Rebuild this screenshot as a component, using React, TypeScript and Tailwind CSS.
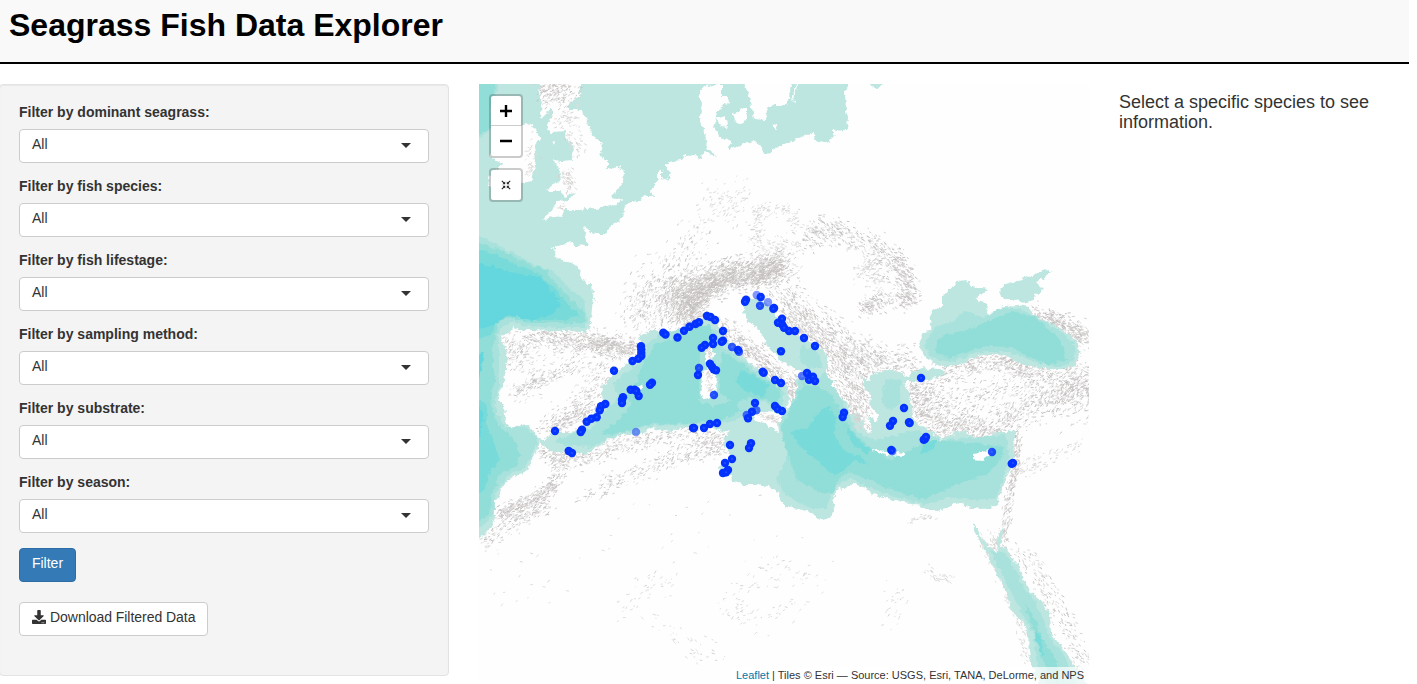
import type { ReactNode } from 'react';
import { FaDownload } from 'react-icons/fa';

const filters = [
  'Filter by dominant seagrass:',
  'Filter by fish species:',
  'Filter by fish lifestage:',
  'Filter by sampling method:',
  'Filter by substrate:',
  'Filter by season:',
];

// ---- Sea areas -------------------------------------------------------------
const atlantic =
  '470,75 848,75 848,87 845,91 846,111 848,117 847,130 832,131 832,134 836,135 831,140 824,143 816,140 813,132 802,136 789,143 772,149 772,153 764,154 762,149 759,144 753,141 742,145 729,149 728,146 732,141 726,139 719,137 718,132 714,127 717,117 721,107 729,102 728,97 722,97 722,84 716,84 703,87 699,93 702,105 700,117 703,130 707,139 705,144 710,150 716,156 712,155 706,151 703,153 702,159 696,158 695,154 686,155 682,160 674,161 667,164 667,170 671,174 667,181 662,178 662,171 661,168 658,171 658,179 654,184 651,191 653,197 645,197 636,202 625,205 623,217 614,224 607,231 605,234 596,234 590,233 588,229 584,227 586,237 588,245 576,246 572,242 562,244 552,248 556,251 554,256 559,259 574,264 581,271 582,277 587,284 592,284 593,294 598,306 593,297 591,321 587,333 572,331 552,331 532,330 522,330 517,327 512,329 511,332 501,336 504,344 507,354 506,367 504,381 499,394 498,399 504,406 506,424 512,427 527,424 534,432 541,440 538,446 534,457 527,471 512,477 502,487 499,497 495,501 495,517 492,527 482,537 470,545';
const mediterranean =
  '539,441 547,437 554,432 567,432 579,431 586,421 596,412 604,404 601,394 602,387 611,377 626,364 639,357 642,344 639,337 649,330 661,331 672,337 679,337 686,329 699,321 707,315 717,321 721,331 727,341 734,348 741,354 749,362 762,371 772,379 782,382 787,389 790,399 786,407 791,407 794,401 800,395 797,387 796,381 802,376 812,377 816,382 812,374 799,371 787,364 776,356 767,346 762,334 757,327 747,321 744,312 744,304 747,299 757,297 762,302 767,304 774,311 779,322 789,331 802,337 816,346 827,354 827,371 831,384 841,397 849,407 850,413 858,415 863,420 866,430 869,433 871,424 867,415 876,421 879,415 870,405 872,398 866,389 862,377 869,381 871,374 879,372 889,369 899,371 906,377 914,372 922,368 939,369 947,372 936,378 922,381 909,381 904,384 909,394 912,407 914,421 920,426 932,432 941,439 952,434 957,430 967,432 976,439 987,437 996,432 1007,432 1014,429 1016,434 1013,441 1014,454 1014,464 1009,471 1004,484 998,501 994,507 982,509 972,508 961,503 954,504 946,509 936,511 922,507 912,503 892,501 889,498 879,496 869,492 866,487 852,484 836,491 833,501 835,509 831,517 823,520 812,514 799,508 786,506 780,499 779,492 767,487 756,485 744,485 732,480 731,476 721,476 719,467 724,464 731,457 724,444 725,437 731,429 722,432 717,429 709,426 699,428 689,427 679,429 666,431 652,428 639,434 626,434 612,438 599,446 586,454 576,453 567,451 559,452 549,451 544,446';
const blackSea =
  '919,344 924,332 930,331 931,312 942,306 942,297 956,282 969,281 972,286 988,289 976,299 987,304 989,316 1004,306 1019,305 1029,307 1032,314 1056,326 1076,341 1080,354 1076,364 1066,369 1046,369 1029,366 1017,362 1004,354 982,354 962,364 949,367 936,364 924,356';
const azov =
  '999,291 1006,284 1022,279 1049,269 1052,271 1044,277 1036,282 1043,289 1036,294 1034,300 1022,303 1017,300 1004,299';
const redSea =
  '974,523 979,532 987,546 994,551 997,549 999,536 1003,523 1002,537 1000,547 1004,547 1019,567 1029,591 1042,601 1050,617 1051,634 1062,647 1072,661 1079,671 1090,690 1042,690 1031,664 1027,637 1024,621 1012,612 1007,594 994,567 986,551 974,531';
const gulfOfFinland = '866,75 886,75 883,84 876,89 870,86';

const depthBands: { fill: string; shapes: string[] }[] = [
  {
    fill: '#a9e2dc',
    shapes: [
      '470,232 500,246 530,262 553,272 570,288 584,300 588,318 585,328 560,328 525,326 512,322 502,327 498,334 499,350 499,385 494,405 504,426 525,427 533,434 538,440 532,456 524,468 508,475 496,492 493,515 470,538',
      '470,75 500,75 494,108 494,126 484,136 470,139',
      '553,441 570,435 592,428 604,412 618,398 613,385 625,372 642,362 647,344 660,334 700,325 716,330 724,348 745,362 770,381 785,392 782,405 758,402 748,411 735,421 700,424 650,426 615,436 590,447 562,445',
      '800,378 816,382 825,372 845,405 856,431 875,440 900,434 917,430 945,440 970,438 1005,435 1010,452 1006,470 996,498 975,500 950,498 925,504 880,492 850,478 830,490 828,508 810,508 785,495 776,480 786,460 786,440 780,428 781,416 791,409',
      '802,346 818,350 823,368 806,368 799,358',
      '923,345 936,326 952,322 965,311 985,318 1000,308 1020,308 1050,325 1074,342 1075,360 1060,367 1035,362 1010,352 980,352 950,362 932,358',
      '990,552 1003,551 1016,570 1024,588 1036,604 1044,620 1048,636 1062,652 1072,672 1078,690 1050,690 1036,658 1034,635 1020,610 1010,590 998,566',
      '886,380 901,379 900,404 888,410 880,400',
    ],
  },
  {
    fill: '#91ded8',
    shapes: [
      '470,240 500,250 525,262 545,270 560,288 577,305 586,314 585,322 560,323 530,323 510,317 500,320 497,330 492,350 495,380 490,402 498,425 514,440 520,452 516,466 500,474 491,496 489,515 470,528',
      '470,75 497,75 491,110 492,125 483,133 470,137',
      '600,434 618,420 632,404 626,396 637,382 640,370 655,345 670,340 695,328 710,325 716,342 700,352 699,400 712,406 735,400 742,412 720,420 695,423 650,424 620,433',
      '722,352 738,360 758,376 778,387 782,396 775,402 755,398 733,402 719,392 720,370',
      '803,384 815,386 830,393 842,412 855,435 870,447 890,460 930,440 975,443 1003,447 1002,458 985,476 962,482 940,492 925,500 900,493 868,480 850,472 838,480 832,494 815,490 797,480 790,460 783,440 782,425 790,411',
      '937,342 945,335 965,331 988,321 1010,312 1032,316 1050,329 1063,345 1066,360 1048,365 1030,357 1010,347 985,346 965,353 948,358 936,353',
      '1024,602 1036,620 1042,640 1054,655 1062,676 1057,684 1042,660 1036,638',
    ],
  },
  {
    fill: '#78dbda',
    shapes: [
      '470,246 498,256 520,266 540,274 558,292 568,304 580,316 565,320 530,320 505,315 496,322 492,335 470,340',
      '470,398 488,405 486,425 494,442 500,460 488,476 485,490 470,492',
      '740,370 757,377 769,384 764,397 745,390 736,382',
      '790,432 808,428 816,415 828,406 836,418 834,436 846,452 860,456 869,466 855,460 835,476 818,462 800,446',
      '845,425 858,440 873,450 866,454 852,444',
      '924,443 938,440 932,451 920,454',
      '1035,630 1039,634 1045,655 1042,656 1036,642',
    ],
  },
  {
    fill: '#63d7dd',
    shapes: [
      '470,262 492,266 515,273 540,277 550,288 561,304 551,315 530,321 508,315 492,326 470,332',
      '470,404 480,406 484,420 478,440 470,442',
      '470,358 484,352 480,376 470,386',
    ],
  },
];

const islands = [
  '541,75 539,94 542,109 541,119 546,114 551,108 553,112 547,129 552,132 566,131 565,139 572,144 574,149 571,156 572,161 562,162 554,161 559,169 561,181 547,188 548,191 559,191 566,197 576,192 569,200 557,201 554,209 542,219 547,220 551,216 561,217 566,210 579,210 602,207 617,205 621,199 611,197 617,191 623,181 624,171 619,167 607,169 607,161 599,154 603,151 600,141 591,134 587,117 577,109 567,109 567,106 579,97 581,75',
  '522,126 531,124 539,134 540,139 534,146 536,161 532,181 522,183 512,187 499,186 489,187 488,177 502,164 491,157 491,151 505,147 502,134 512,127',
  '744,75 745,86 751,101 754,119 766,120 767,109 772,105 786,105 789,97 793,75',
  '732,114 739,113 742,107 747,107 747,117 742,124 734,121',
  '717,119 724,116 728,122 726,127 719,125',
  '795,84 797,84 794,101 792,103',
  '773,125 776,124 777,128 773,127',
  '711,344 714,354 711,363 705,360 705,350',
  '704,371 710,368 717,374 716,389 712,397 706,400 701,396 702,384 701,374',
  '753,415 761,412 779,413 789,405 778,424 779,432 774,430 764,423 755,421',
  '637,386 642,384 643,388 639,391',
  '973,454 986,451 994,448 988,457 982,460 973,459',
  '873,449 885,451 904,453 903,456 886,455 874,452',
  '552,142 555,141 554,146',
];

// ---- Relief shading --------------------------------------------------------
type Range = { at: [number, number][]; spread: number; count: number; angle: number };

const mainlandRanges: Range[] = [
  { at: [[688, 315], [690, 295], [715, 278], [750, 270], [785, 266]], spread: 10, count: 1700, angle: -25 },
  { at: [[678, 315], [672, 295], [690, 282]], spread: 11, count: 450, angle: -60 },
  { at: [[695, 298], [720, 284], [760, 276], [780, 270]], spread: 7, count: 600, angle: -20 },
  { at: [[655, 320], [640, 310], [648, 292], [668, 270], [700, 240]], spread: 14, count: 260, angle: -55 },
  { at: [[635, 335], [640, 310], [650, 290]], spread: 12, count: 110, angle: -60 },
  { at: [[525, 335], [560, 338], [590, 340], [635, 350]], spread: 8, count: 480, angle: 12 },
  { at: [[590, 343], [632, 348]], spread: 6, count: 280, angle: 15 },
  { at: [[508, 340], [515, 360], [512, 345]], spread: 10, count: 140, angle: -30 },
  { at: [[515, 392], [540, 380], [575, 368]], spread: 5, count: 150, angle: -28 },
  { at: [[515, 380], [545, 360], [600, 375]], spread: 20, count: 120, angle: -28 },
  { at: [[575, 350], [605, 375], [590, 400], [555, 425]], spread: 10, count: 260, angle: -35 },
  { at: [[540, 430], [570, 420], [590, 408]], spread: 6, count: 180, angle: -20 },
  { at: [[499, 514], [520, 507], [540, 497], [560, 475]], spread: 5, count: 420, angle: -25 },
  { at: [[480, 545], [505, 528], [530, 515], [550, 505]], spread: 5, count: 180, angle: -30 },
  { at: [[542, 447], [560, 462], [590, 455], [630, 441], [690, 436], [725, 440]], spread: 7, count: 640, angle: -22 },
  { at: [[580, 500], [620, 480], [660, 463], [700, 452], [722, 446]], spread: 6, count: 280, angle: -28 },
  { at: [[715, 325], [735, 337], [752, 352], [770, 368], [790, 380], [792, 396]], spread: 7, count: 580, angle: 40 },
  { at: [[775, 290], [793, 320], [820, 340], [843, 370], [855, 400], [862, 420]], spread: 14, count: 1100, angle: 48 },
  { at: [[785, 310], [820, 328], [845, 350], [870, 365]], spread: 13, count: 480, angle: 45 },
  { at: [[860, 350], [880, 364], [915, 361]], spread: 11, count: 280, angle: 10 },
  { at: [[862, 308], [880, 300], [908, 301], [907, 280], [895, 255]], spread: 6, count: 420, angle: 12 },
  { at: [[805, 240], [825, 228], [850, 236], [880, 250], [905, 280]], spread: 8, count: 460, angle: 30 },
  { at: [[755, 237], [755, 212], [785, 209], [800, 230]], spread: 5, count: 125, angle: -25 },
  { at: [[685, 255], [715, 202], [737, 195], [728, 214]], spread: 12, count: 129, angle: -35 },
  { at: [[750, 240], [775, 252], [800, 240]], spread: 7, count: 100, angle: 20 },
  { at: [[858, 276], [870, 262], [876, 288]], spread: 6, count: 125, angle: -25 },
  { at: [[913, 385], [923, 405], [935, 425]], spread: 12, count: 450, angle: -15 },
  { at: [[938, 378], [970, 362], [1005, 360], [1035, 375], [1085, 370]], spread: 8, count: 650, angle: -10 },
  { at: [[935, 430], [965, 425], [990, 435], [1015, 415], [1055, 398], [1088, 386]], spread: 9, count: 800, angle: -32 },
  { at: [[940, 395], [970, 405], [1005, 388], [1050, 382]], spread: 12, count: 280, angle: -30 },
  { at: [[1040, 400], [1089, 378], [1088, 420]], spread: 15, count: 320, angle: -35 },
  { at: [[1035, 313], [1060, 326], [1089, 338]], spread: 7, count: 450, angle: 25 },
  { at: [[1016, 435], [1016, 466], [1008, 500], [1004, 540]], spread: 3, count: 260, angle: -72 },
  { at: [[1015, 475], [1045, 458], [1080, 446]], spread: 5, count: 90, angle: -30 },
  { at: [[985, 545], [998, 548], [995, 532]], spread: 5, count: 100, angle: 55 },
  { at: [[1006, 547], [1038, 570], [1052, 602], [1072, 640], [1089, 665]], spread: 7, count: 240, angle: 45 },
  { at: [[978, 534], [1000, 578], [1018, 618], [1025, 660]], spread: 3, count: 125, angle: 60 },
  { at: [[905, 523], [920, 517], [934, 518]], spread: 1.5, count: 30, angle: -20 },
  { at: [[925, 568], [935, 578], [952, 578]], spread: 3, count: 34, angle: 25 },
  { at: [[883, 625], [900, 608], [890, 590]], spread: 8, count: 28, angle: -35 },
  { at: [[735, 592], [772, 572], [810, 585]], spread: 12, count: 60, angle: -30 },
  { at: [[725, 605], [750, 625], [800, 608]], spread: 10, count: 55, angle: -20 },
  { at: [[620, 615], [640, 590], [665, 580]], spread: 9, count: 45, angle: -40 },
  { at: [[640, 620], [690, 640], [720, 660]], spread: 9, count: 45, angle: 25 },
  { at: [[480, 595], [580, 560], [700, 520], [870, 570]], spread: 30, count: 50, angle: -20 },
];

const islandRanges: Range[] = [
  { at: [[546, 80], [552, 95], [572, 92]], spread: 8, count: 230, angle: -25 },
  { at: [[554, 120], [574, 118]], spread: 6, count: 50, angle: -25 },
  { at: [[570, 135], [583, 150]], spread: 6, count: 45, angle: 50 },
  { at: [[565, 170], [569, 188]], spread: 4, count: 70, angle: 50 },
  { at: [[557, 210], [566, 205]], spread: 2, count: 10, angle: -20 },
  { at: [[530, 132], [531, 160], [528, 176]], spread: 4, count: 40, angle: -30 },
  { at: [[708, 348], [709, 360]], spread: 2, count: 35, angle: -60 },
  { at: [[708, 372], [710, 392]], spread: 3, count: 40, angle: -40 },
  { at: [[760, 416], [776, 420]], spread: 2.5, count: 50, angle: -15 },
  { at: [[856, 412], [862, 426]], spread: 5, count: 60, angle: 60 },
];

function relief(ranges: Range[], seed: number): string[] {
  let s = seed;
  const rnd = () => {
    s = (s * 1664525 + 1013904223) % 4294967296;
    return s / 4294967296;
  };
  const shades = ['', '', ''];
  for (const { at, spread, count, angle } of ranges) {
    const depth = count < 130 ? 1.4 : 3;
    for (let i = 0; i < count; i++) {
      const p = rnd() * (at.length - 1);
      const k = Math.floor(p);
      const f = p - k;
      const g = () => rnd() + rnd() + rnd() - 1.5;
      const x = at[k][0] + (at[k + 1][0] - at[k][0]) * f + g() * spread * 1.6;
      const y = at[k][1] + (at[k + 1][1] - at[k][1]) * f + g() * spread * 1.6;
      const a = ((angle + (rnd() - 0.5) * 80) * Math.PI) / 180;
      const len = 0.8 + rnd() * 2.8;
      shades[Math.floor(rnd() * depth)] += `M${x.toFixed(1)} ${y.toFixed(1)}l${(Math.cos(a) * len).toFixed(1)} ${(Math.sin(a) * len).toFixed(1)}`;
    }
  }
  return shades;
}

const mainlandRelief = relief(mainlandRanges, 7);
const islandRelief = relief(islandRanges, 21);
const reliefColors = ['#dedcdb', '#d2cfce', '#c2bebd'];

// ---- Survey sites: [x, y, opacity] -----------------------------------------
const sites: [number, number, number?][] = [
  [663.3, 332.8], [665.5, 334.5], [677.5, 337.5], [684, 330.7], [689.5, 326.7], [695.5, 324], [699, 322.3], [707, 316], [710.5, 317], [715, 320],
  [641, 346.3], [641.3, 349.6], [641.3, 353], [641.3, 356], [638.3, 358.7], [632.5, 361], [614, 370.7], [652, 382.7], [650, 384.7],
  [630.7, 389.7], [634.7, 389.7], [636.3, 391], [638.7, 396], [623, 397.3], [622, 400], [622, 403], [605.3, 404], [601, 406.3], [599.7, 410.3],
  [596.7, 417.3], [591.3, 418.7], [586.7, 421.7], [555, 431], [582, 429.7], [580.7, 432], [568.7, 451], [572, 453], [636, 432, 0.5],
  [723, 331], [723, 340.7], [721.7, 341.7], [713, 338], [713, 344], [705, 345], [701.7, 347.7], [732, 347, 0.8], [738, 350], [739, 351.7, 0.8],
  [746, 299.7], [745, 301.7], [756.7, 295, 0.5], [760.7, 297], [768, 302.3, 0.5], [760, 305.7, 0.85], [774, 308], [773.3, 308.7],
  [782, 318.7], [778, 322.7], [782.3, 324.7], [784, 327.7], [789, 331], [795, 331], [804, 338], [815, 346], [781, 351.3],
  [710, 363.7], [712, 366.7], [713.7, 369.3], [716, 370.3], [699, 368, 0.85], [698, 375], [714, 395, 0.85], [762.7, 371.7], [763.7, 372.7],
  [775, 380], [781, 383], [802, 376, 0.65], [807, 373], [809, 379.7], [813, 376.7], [815, 381], [755, 403], [752, 411.7], [756.3, 410.3, 0.7],
  [746.7, 415, 0.7], [748, 418.3], [775, 406], [777.7, 409], [782, 411], [844, 412.7], [842.7, 417], [693, 428], [694, 428], [704, 428],
  [710, 424], [717, 423], [730, 445], [751, 443.3], [749, 448], [732, 459], [725, 463], [728, 470], [723, 473], [726, 472.3],
  [921, 378], [904, 408], [893, 421], [890, 425.7], [909, 422.3], [909.7, 423], [891.3, 450], [892.3, 451, 0.7], [925, 439], [923.7, 439.7],
  [926, 437], [992, 452, 0.85], [1011.7, 463.7], [1013, 463],
];

function Relief({ layers }: { layers: string[] }) {
  return (
    <>
      {layers.map((d, i) => (
        <path key={i} d={d} stroke={reliefColors[i]} strokeWidth="0.9" fill="none" />
      ))}
    </>
  );
}

function BaseMap() {
  return (
    <svg viewBox="479 84 610 600" className="block h-[600px] w-[610px]">
      <defs>
        <filter id="coast" filterUnits="userSpaceOnUse" x="470" y="75" width="630" height="620" colorInterpolationFilters="sRGB">
          <feTurbulence type="fractalNoise" baseFrequency="0.19" numOctaves="3" seed="4" />
          <feDisplacementMap in="SourceGraphic" scale="6" xChannelSelector="R" yChannelSelector="G" />
        </filter>
      </defs>
      <rect x="479" y="84" width="610" height="600" fill="#fefefe" />
      <Relief layers={mainlandRelief} />
      <g filter="url(#coast)">
        <g fill="#bde6e0">
          {[atlantic, mediterranean, blackSea, azov, redSea, gulfOfFinland].map((points) => (
            <polygon key={points} points={points} />
          ))}
        </g>
        {depthBands.map((band) => (
          <g key={band.fill} fill={band.fill}>
            {band.shapes.map((points) => (
              <polygon key={points} points={points} />
            ))}
          </g>
        ))}
        <g fill="#fefefe">
          {islands.map((points) => (
            <polygon key={points} points={points} />
          ))}
        </g>
      </g>
      <Relief layers={islandRelief} />
      {sites.map(([x, y, opacity = 1], i) => (
        <g key={i} opacity={opacity}>
          <circle cx={x} cy={y} r="4.2" fill="#0433ff" />
          <circle cx={x} cy={y} r="1" fill="#2450ff" />
        </g>
      ))}
    </svg>
  );
}

function ControlBar({ className, children }: { className: string; children: ReactNode }) {
  return (
    <div className={`absolute left-[10px] flex w-[34px] flex-col overflow-hidden rounded-[4px] border-2 border-black/20 bg-white bg-clip-padding ${className}`}>
      {children}
    </div>
  );
}

export default function App() {
  return (
    <div className="h-[684px] w-[1409px] overflow-hidden bg-white font-['Liberation_Sans',Arial,sans-serif] text-sm leading-5 text-[#333]">
      <header className="h-16 border-b-2 border-black bg-[#f9f9f9] pl-[9px] pt-2">
        <h1 className="text-[32px] font-bold leading-[35px] text-black">Seagrass Fish Data Explorer</h1>
      </header>

      <main className="flex items-start pt-5">
        <aside className="-ml-px h-[592px] w-[450px] shrink-0 rounded-[4px] border border-[#e3e3e3] bg-[#f4f4f4] p-[19px] shadow-[inset_0_1px_1px_rgba(0,0,0,0.05)]">
          {filters.map((label) => (
            <div key={label} className="mb-[15px]">
              <div className="mb-[5px] h-5 font-bold leading-4">{label}</div>
              <div className="flex h-[34px] items-center justify-between rounded-[4px] border border-[#ccc] bg-white pl-3 pr-[17px]">
                <span className="pb-1">All</span>
                <span className="mb-px border-x-[5px] border-t-[5px] border-x-transparent border-t-[#333]" />
              </div>
            </div>
          ))}
          <button className="block h-[34px] w-[57px] rounded-[4px] border border-[#2e6da4] bg-[#337ab7] pb-1 text-center text-white">
            Filter
          </button>
          <button className="mt-5 flex h-[34px] w-[189px] items-center whitespace-nowrap rounded-[4px] border border-[#ccc] bg-white pb-1 pl-3">
            <FaDownload className="mr-1 size-[14px] shrink-0" />
            <span className="tracking-[-0.04px]">Download Filtered Data</span>
          </button>
        </aside>

        <section className="relative ml-[30px] h-[600px] w-[610px] shrink-0 overflow-hidden">
          <BaseMap />
          <ControlBar className="top-[10px] h-16">
            <div className="flex h-[30px] items-center justify-center border-b border-[#ccc]">
              <svg viewBox="0 0 12 12" className="mt-px size-3">
                <path d="M0 6H12M6 0V12" stroke="#000" strokeWidth="2.4" />
              </svg>
            </div>
            <div className="flex h-[30px] items-center justify-center">
              <svg viewBox="0 0 12 12" className="size-3">
                <path d="M0 6H12" stroke="#000" strokeWidth="2.4" />
              </svg>
            </div>
          </ControlBar>
          <ControlBar className="top-[84px] h-[34px]">
            <div className="flex h-[30px] items-center justify-center">
              <svg viewBox="0 0 10 10" className="size-[10px]">
                <path d="M.8 .8L3.4 3.4M9.2 .8L6.6 3.4M.8 9.2L3.4 6.6M9.2 9.2L6.6 6.6" stroke="#222" strokeWidth="1.1" fill="none" />
                <path d="M4.2 1.6V4.2H1.4ZM5.8 1.6V4.2H8.6ZM4.2 8.4V5.8H1.4ZM5.8 8.4V5.8H8.6Z" fill="#222" />
              </svg>
            </div>
          </ControlBar>
          <div className="absolute bottom-0 right-0 h-[17px] bg-white/70 px-[5px] text-[11px] leading-[17px]">
            <span className="text-[#0078a8]">Leaflet</span> | Tiles © Esri — Source: USGS, Esri, TANA, DeLorme, and NPS
          </div>
        </section>

        <section className="ml-[30px] w-[270px] pt-2">
          <h4 className="text-[18px] leading-5">Select a specific species to see information.</h4>
        </section>
      </main>
    </div>
  );
}
